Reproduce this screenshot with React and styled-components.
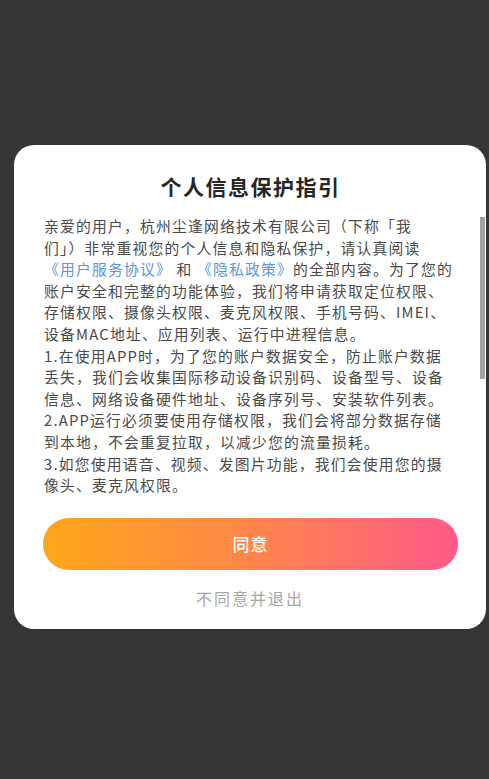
import React from "react";
import styled, { createGlobalStyle } from "styled-components";

const GlobalStyle = createGlobalStyle`
  html, body {
    margin: 0;
    padding: 0;
    background: #363636;
  }
  body {
    font-family: "Noto Sans CJK SC", "Noto Sans", sans-serif;
  }
`;

const introLines = [
  "亲爱的用户，杭州尘逢网络技术有限公司（下称「我",
  "们」）非常重视您的个人信息和隐私保护，请认真阅读",
  null,
  "账户安全和完整的功能体验，我们将申请获取定位权限、",
  "存储权限、摄像头权限、麦克风权限、手机号码、IMEI、",
  "设备MAC地址、应用列表、运行中进程信息。",
];

const itemLines = [
  "1.在使用APP时，为了您的账户数据安全，防止账户数据",
  "丢失，我们会收集国际移动设备识别码、设备型号、设备",
  "信息、网络设备硬件地址、设备序列号、安装软件列表。",
  "2.APP运行必须要使用存储权限，我们会将部分数据存储",
  "到本地，不会重复拉取，以减少您的流量损耗。",
  "3.如您使用语音、视频、发图片功能，我们会使用您的摄",
  "像头、麦克风权限。",
];

export default function App() {
  return (
    <>
      <GlobalStyle />
      <Screen>
        <Dialog>
          <Title>个人信息保护指引</Title>
          <Content>
            {introLines.map((line, i) =>
              line === null ? (
                <Line key={i}>
                  <Link>《用户服务协议》</Link> 和 <Link>《隐私政策》</Link>
                  的全部内容。为了您的
                </Line>
              ) : (
                <Line key={i}>{line}</Line>
              )
            )}
            {itemLines.map((line, i) => (
              <Line key={"item" + i}>{line}</Line>
            ))}
            <ScrollThumb />
          </Content>
          <AgreeButton>同意</AgreeButton>
          <DeclineButton>不同意并退出</DeclineButton>
        </Dialog>
      </Screen>
    </>
  );
}

const Screen = styled.div`
  width: 489px;
  height: 779px;
  display: flex;
  flex-direction: column;
  padding-top: 145px;
  box-sizing: border-box;
`;

const Dialog = styled.div`
  margin-left: 14px;
  width: 472px;
  height: 484px;
  box-sizing: border-box;
  background: #fff;
  border-radius: 20px;
  padding: 26px 28px 0 29px;
  display: flex;
  flex-direction: column;
  align-items: stretch;
`;

const Title = styled.h1`
  margin: 0;
  font-size: 21px;
  line-height: 30px;
  font-weight: 700;
  color: #262626;
  text-align: center;
  letter-spacing: 1.5px;
`;

const Content = styled.div`
  position: relative;
  margin-top: 14px;
  padding-left: 1px;
  width: 401px;
  font-size: 14.8px;
  letter-spacing: 1.2px;
  line-height: 21.6px;
  color: #4a4a4a;
`;

const Line = styled.div`
  white-space: nowrap;
`;

const Link = styled.span`
  color: #5a95e0;
`;

const ScrollThumb = styled.div`
  position: absolute;
  top: 2px;
  left: 437px;
  width: 5px;
  height: 162px;
  background: #a3a3a3;
`;

const AgreeButton = styled.button`
  margin-top: 22px;
  height: 52px;
  width: 415px;
  border: none;
  border-radius: 26px;
  background: linear-gradient(90deg, #ffa619 0%, #ff8a45 45%, #ff5a89 100%);
  color: #fff;
  font-family: "Noto Sans CJK SC", sans-serif;
  font-size: 17px;
  font-weight: 500;
  letter-spacing: 1px;
`;

const DeclineButton = styled.button`
  margin-top: 16px;
  align-self: center;
  margin-left: -1px;
  border: none;
  background: none;
  padding: 0;
  color: #a6a6a6;
  font-family: "Noto Sans CJK SC", sans-serif;
  font-size: 16px;
  line-height: 24px;
  letter-spacing: 2px;
`;
